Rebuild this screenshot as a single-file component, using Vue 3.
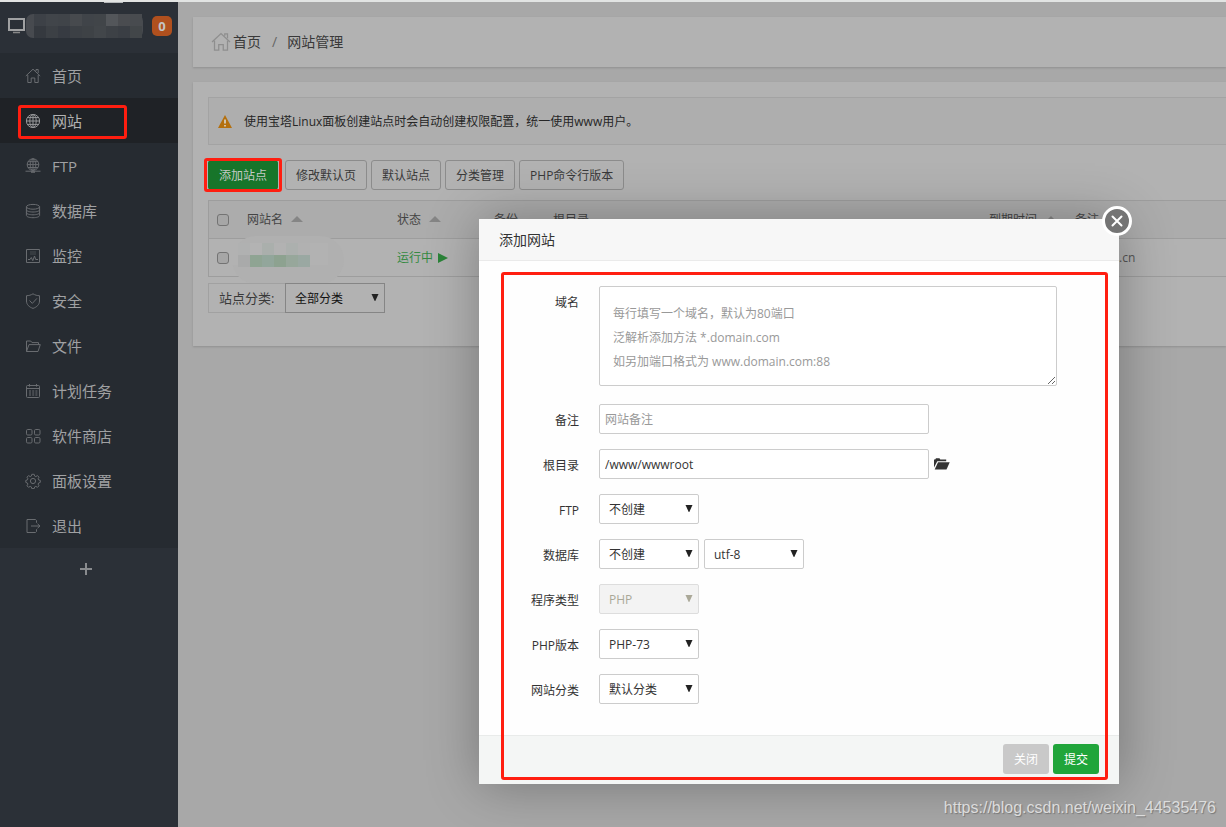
<script setup>
import { ref } from 'vue'

const menu = [
  { label: '首页', icon: 'home' },
  { label: '网站', icon: 'globe', active: true },
  { label: 'FTP', icon: 'ftp' },
  { label: '数据库', icon: 'database' },
  { label: '监控', icon: 'monitor' },
  { label: '安全', icon: 'shield' },
  { label: '文件', icon: 'folder' },
  { label: '计划任务', icon: 'calendar' },
  { label: '软件商店', icon: 'grid' },
  { label: '面板设置', icon: 'gear' },
  { label: '退出', icon: 'exit' },
]

const icons = {
  home: '<path d="M.8 8 8 1.2 15.2 8M2.8 7v7.5h3.4V10h3.6v4.5h3.4V7M11 3V1.5h2.2V5"/>',
  globe: '<circle cx="8" cy="8" r="6.6"/><ellipse cx="8" cy="8" rx="3.2" ry="6.6"/><path d="M8 1.4v13.2M1.4 8h13.2M2.5 4.6h11M2.5 11.4h11"/>',
  ftp: '<circle cx="8" cy="6.6" r="5.8"/><ellipse cx="8" cy="6.6" rx="2.8" ry="5.8"/><path d="M8 .8v11.6M2.2 6.6h11.6M3 3.7h10M3 9.5h10M.5 13.2h15"/><path d="M6 14h4" stroke-width="1.6"/>',
  database: '<ellipse cx="8" cy="3.8" rx="6.6" ry="2.4"/><path d="M1.4 3.8v8.6c0 1.4 3 2.3 6.6 2.3s6.6-.9 6.6-2.3V3.8M1.4 6.8c0 1.3 3 2.2 6.6 2.2s6.6-.9 6.6-2.2M1.4 9.6c0 1.3 3 2.2 6.6 2.2s6.6-.9 6.6-2.2"/>',
  monitor: '<path d="M1.5 1.5h13v13h-13z"/><path d="M5 4h6M5 6h6" opacity=".5"/><path d="M3 11.5h2l1.3-2 1.5 3.2L9.5 8l1.2 3.5H13"/>',
  shield: '<path d="M8 .8c2 1.3 4.2 1.9 6.5 1.9V8c0 3.6-2.6 6-6.5 7.4C4.1 14 1.5 11.6 1.5 8V2.7C3.8 2.7 6 2.1 8 .8z"/><path d="m4.6 7.500 2.700 2.900 4.600-5"/>',
  folder: '<path d="M1.5 13.5V3h4.200l1.300 1.600h6.500v2M1.500 13.500 4 6.600h11.300l-2.300 6.900z"/>',
  calendar: '<rect x="1.500" y="2.500" width="13" height="12" rx="1"/><path d="M1.500 5.500h13M4.500 1v2.600M11.500 1v2.600"/><path d="M4 8h9M4 10h9M4 12h9" stroke-dasharray="2 1.200"/>',
  grid: '<rect x="1.500" y="1.500" width="5.500" height="5.500" rx="1.200"/><rect x="9.500" y="1.500" width="5.500" height="5.500" rx="1.200"/><rect x="1.500" y="9.500" width="5.500" height="5.500" rx="1.200"/><rect x="9.500" y="9.500" width="5.500" height="5.500" rx="1.200"/>',
  gear: '<circle cx="8" cy="8" r="2.600"/><path d="M6.800 1.300h2.400l.5 1.800 1.100.5 1.700-1 1.500 1.600-.9 1.600.5 1.100 1.700.5v2l-1.700.6-.5 1.100.9 1.700-1.500 1.500-1.700-.9-1.100.5-.5 1.700H6.800l-.5-1.700-1.100-.5-1.700.9L2 12.800l.9-1.700-.5-1.100-1.600-.6v-2l1.600-.5.5-1.100L2 4.200l1.500-1.600 1.700 1 1.100-.5z"/>',
  exit: '<path d="M11.500 4.800V2.500l-1-1H2v13h8.500l1-1v-2.300M6 8h9M12.500 5.800 15 8l-2.500 2.200"/>',
}

const headBlocks = [
  ['#3d4147', '#41454a', '#404449', '#474a4e', '#404449', '#414549', '#53565a', '#4a4c50', '#484b4f'],
  ['#35393f', '#3c4045', '#373b42', '#3c4045', '#3e4246', '#42464a', '#3d4146', '#3a3e44', '#424649'],
]
const rowBlocks = [
  ['#b0b1b1', '#b3b3b3', '#aaafac', '#b2b2b2', '#acb0ae', '#b1b1b1'],
  ['#a9aaaa', '#8fa493', '#92a69b', '#8da290', '#97a79b', '#9aa8a2'],
]

const hint = '每行填写一个域名，默认为80端口\n泛解析添加方法 *.domain.com\n如另加端口格式为 www.domain.com:88'
const domains = ref('')
const note = ref('')
const path = ref('/www/wwwroot')

const selectRows = [
  { label: 'FTP', id: 'ftp', fields: [['不创建', '创建']] },
  { label: '数据库', id: 'db', fields: [['不创建', 'MySQL'], ['utf-8', 'gbk']] },
  { label: '程序类型', id: 'type', disabled: true, fields: [['PHP']] },
  { label: 'PHP版本', id: 'php', fields: [['PHP-73', '纯静态']] },
  { label: '网站分类', id: 'category', fields: [['默认分类']] },
]
</script>

<template>
  <div class="panel">
    <aside class="sidebar">
      <div class="notch"></div>
      <header class="server">
        <svg class="screen" viewBox="0 0 18 18" aria-hidden="true"><path d="M1 2h15v11H1z" fill="none" stroke="#a0a1a2" stroke-width="2" /><path d="M5 15.500h7" stroke="#888" stroke-width="1.500" /></svg>
        <svg class="mosaic" viewBox="0 0 117 24" aria-hidden="true">
          <rect width="117" height="24" rx="7" fill="#474a4f" />
          <g v-for="(line, y) in headBlocks" :key="y">
            <rect v-for="(c, x) in line" :key="x" :x="8 + x * 12" :y="y * 12" width="12" height="12" :fill="c" />
          </g>
        </svg>
        <span class="badge">0</span>
      </header>
      <nav>
        <ul class="menu">
          <li v-for="m in menu" :key="m.label">
            <a href="#" :class="{ active: m.active }">
              <svg class="menu-icon" viewBox="0 0 16 16" aria-hidden="true" v-html="icons[m.icon]"></svg>
              <span>{{ m.label }}</span>
            </a>
          </li>
        </ul>
      </nav>
      <button class="add-menu" type="button" aria-label="添加菜单">
        <svg viewBox="0 0 14 14" aria-hidden="true"><path d="M7 1v12M1 7h12" stroke="#898b8e" stroke-width="2" /></svg>
      </button>
    </aside>

    <main class="main">
      <div class="crumbs card">
        <svg class="crumb-icon" viewBox="0 0 16 16" aria-hidden="true" v-html="icons.home"></svg>
        <a href="#">首页</a><span class="slash">/</span><a href="#">网站管理</a>
      </div>

      <section class="content card">
        <p class="notice">
          <svg viewBox="0 0 14 13" aria-hidden="true"><path d="M7 0 14 13H0z" fill="#b4700f" /><path d="M7 4.500v4M7 10v1.500" stroke="#d2c4ad" stroke-width="2" /></svg>
          <span>使用宝塔Linux面板创建站点时会自动创建权限配置，统一使用www用户。</span>
        </p>
        <div class="tools">
          <button type="button" class="primary">添加站点</button>
          <button type="button">修改默认页</button>
          <button type="button">默认站点</button>
          <button type="button">分类管理</button>
          <button type="button">PHP命令行版本</button>
        </div>
        <table class="sites">
          <colgroup>
            <col class="c-check" /><col class="c-name" /><col class="c-state" /><col class="c-backup" /><col class="c-root" /><col class="c-end" /><col />
          </colgroup>
          <thead>
            <tr>
              <th><input type="checkbox" aria-label="全选" /></th>
              <th>网站名<i class="sort"></i></th>
              <th>状态<i class="sort"></i></th>
              <th>备份</th>
              <th>根目录</th>
              <th>到期时间<i class="sort"></i></th>
              <th>备注</th>
            </tr>
          </thead>
          <tbody>
            <tr>
              <td><input type="checkbox" aria-label="选择站点" /></td>
              <td class="name">
                <svg class="site-mosaic" viewBox="0 0 112 50" aria-hidden="true">
                  <rect y="1" width="112" height="48" rx="24" fill="#b0b0b0" />
                  <path d="M0 8h96v22H0z" fill="#b2b2b2" />
                  <g v-for="(line, y) in rowBlocks" :key="y">
                    <rect v-for="(c, x) in line" :key="x" :x="6 + x * 12" :y="8 + y * 12" width="12" height="12" :fill="c" />
                  </g>
                </svg>
              </td>
              <td><a class="running" href="#">运行中<i class="play"></i></a></td>
              <td></td>
              <td></td>
              <td></td>
              <td class="remark">.cn</td>
            </tr>
          </tbody>
        </table>
        <div class="filter">
          <label for="site-class">站点分类:</label>
          <span class="select">
            <select id="site-class"><option>全部分类</option></select>
            <svg viewBox="0 0 8 7" aria-hidden="true"><path d="M.5 0h7L4.300 7h-.6z" /></svg>
          </span>
        </div>
      </section>
    </main>

    <form class="dialog" role="dialog" aria-labelledby="dialog-title" @submit.prevent>
      <h2 id="dialog-title">添加网站</h2>
      <button class="close" type="button" aria-label="关闭窗口">
        <svg viewBox="0 0 12 12" aria-hidden="true"><path d="m1.500 1.500 9 9M10.500 1.500l-9 9" stroke="#fff" stroke-width="2" stroke-linecap="round" /></svg>
      </button>
      <div class="fields">
        <div class="row tall">
          <label for="domains">域名</label>
          <textarea id="domains" v-model="domains" :placeholder="hint"></textarea>
        </div>
        <div class="row">
          <label for="note">备注</label>
          <input id="note" v-model="note" type="text" placeholder="网站备注" />
        </div>
        <div class="row">
          <label for="path">根目录</label>
          <input id="path" v-model="path" type="text" />
          <button class="browse" type="button" aria-label="选择目录">
            <svg viewBox="0 0 16 12" aria-hidden="true"><path d="M0 9.500V1.500h1.200L2 .3h3.500l.8 1.200h5.900v1.700H3.300z" /><path d="M4 4.200h11.700L12.500 11.500H.7z" /></svg>
          </button>
        </div>
        <div v-for="r in selectRows" :key="r.id" class="row">
          <label :for="r.id + 0">{{ r.label }}</label>
          <span v-for="(options, i) in r.fields" :key="i" class="select">
            <select :id="r.id + i" :disabled="r.disabled" :aria-label="i ? '编码' : r.label">
              <option v-for="o in options" :key="o">{{ o }}</option>
            </select>
            <svg viewBox="0 0 8 7" aria-hidden="true"><path d="M.5 0h7L4.300 7h-.6z" /></svg>
          </span>
        </div>
      </div>
      <footer class="actions">
        <button type="button" class="cancel">关闭</button>
        <button type="submit" class="submit">提交</button>
      </footer>
    </form>

    <p class="watermark">https://blog.csdn.net/weixin_44535476</p>
  </div>
</template>

<style>
body {
  margin: 0;
  background: #a8a8a8;
}
</style>

<style scoped>
*, *::after {
  box-sizing: border-box;
}
.panel {
  position: relative;
  display: flex;
  min-height: 100vh;
  overflow: hidden;
  border-top: 2px solid #e2e4e3;
  font-family: "Open Sans", "Noto Sans CJK SC", sans-serif;
  font-size: 12px;
  line-height: 18px;
  color: #393939;
}
button, input, select, textarea {
  margin: 0;
  font: inherit;
  color: inherit;
}
a {
  color: inherit;
  text-decoration: none;
}

/* sidebar */
.sidebar {
  position: relative;
  flex: 0 0 178px;
  background: #2b3037;
}
.notch {
  position: absolute;
  top: -1px;
  left: 104px;
  width: 19px;
  height: 2px;
  background: #b5b8ba;
}
.server {
  display: flex;
  align-items: center;
  height: 51px;
  padding: 0 6px 3px 8px;
}
.screen {
  width: 18px;
  height: 18px;
}
.mosaic {
  width: 117px;
  height: 24px;
}
.badge {
  width: 20px;
  margin-left: auto;
  border-radius: 5px;
  background: #b0501e;
  color: #c4c4c4;
  font-size: 13px;
  font-weight: 700;
  line-height: 20px;
  text-align: center;
}
.menu {
  margin: 0;
  padding: 0;
  list-style: none;
}
.menu a {
  position: relative;
  display: flex;
  align-items: center;
  gap: 11px;
  height: 45px;
  padding-left: 25px;
  background: #262b31;
  color: #a0a1a3;
  font-size: 15px;
}
.menu a.active {
  background: #1f2226;
  color: #b2b2b2;
}
.menu a.active::after {
  content: "";
  position: absolute;
  top: 7px;
  left: 18px;
  width: 109px;
  height: 34px;
  border: 3px solid #ff1e10;
  border-radius: 3px;
}
.menu-icon {
  width: 16px;
  height: 16px;
  fill: none;
  stroke: #696c70;
}
.active .menu-icon {
  stroke: #97989a;
}
.add-menu {
  display: flex;
  justify-content: center;
  width: 100%;
  padding: 14px 6px 14px 0;
  border: 0;
  background: none;
}
.add-menu svg {
  width: 14px;
  height: 14px;
}

/* page */
.main {
  flex: 1;
  min-width: 0;
  padding: 15px 0 15px 15px;
}
.card {
  background: #b2b2b2;
  box-shadow: 0 1px 2px rgba(0, 0, 0, 0.15);
}
.crumbs {
  display: flex;
  align-items: center;
  height: 50px;
  padding-left: 18px;
  font-size: 14px;
}
.crumb-icon {
  width: 20px;
  height: 20px;
  margin-right: 2px;
  fill: none;
  stroke: #8e8e8e;
}
.slash {
  margin: 0 10px 0 11px;
  color: #666;
}
.content {
  margin-top: 15px;
  padding: 15px 0 33px 15px;
}
.notice {
  display: flex;
  align-items: center;
  gap: 12px;
  height: 48px;
  margin: 0 0 15px;
  padding-left: 9px;
  border: 1px solid #a3a3a3;
  border-right: 0;
  background: #aeaeae;
  color: #262626;
}
.notice svg {
  width: 14px;
  height: 13px;
}
.notice span {
  padding-top: 2px;
}
.tools {
  display: flex;
  gap: 4px;
}
.tools button {
  position: relative;
  height: 30px;
  padding: 2px 10px 0;
  border: 1px solid #8c8c8c;
  border-radius: 3px;
  background: #b2b2b2;
}
.tools .primary {
  margin-right: 3px;
  border-color: #17752a;
  background: #17752a;
  color: #c4c9c5;
}
.primary::after {
  content: "";
  position: absolute;
  inset: -3px -5px;
  border: 3px solid #ff1e10;
  border-radius: 3px;
}
.sites {
  width: 100%;
  margin-top: 10px;
  border-collapse: separate;
  border-spacing: 0;
  border-top: 1px solid #9d9d9d;
  border-left: 1px solid #9d9d9d;
  table-layout: fixed;
}
.c-check { width: 30px; }
.c-name { width: 150px; }
.c-state { width: 97px; }
.c-backup { width: 59px; }
.c-root { width: 436px; }
.c-end { width: 86px; }
.sites th, .sites td {
  height: 38px;
  padding: 0 8px;
  border-bottom: 1px solid #9d9d9d;
  font-weight: 400;
  text-align: left;
  white-space: nowrap;
}
.sites th {
  background: #acacac;
  color: #444;
}
.sites input {
  display: block;
  appearance: none;
  width: 12px;
  height: 12px;
  border: 1px solid #737373;
  border-radius: 3px;
  background: #a6a6a6;
}
.sort {
  display: inline-block;
  margin: 0 0 2px 8px;
  border: 6px solid transparent;
  border-top-width: 0;
  border-bottom: 6px solid #858585;
}
.sites .name {
  position: relative;
  padding: 0;
}
.site-mosaic {
  position: absolute;
  top: -4px;
  left: -7px;
  width: 112px;
  height: 50px;
}
.running {
  color: #358a42;
}
.play {
  display: inline-block;
  margin-left: 5px;
  border: 5px solid transparent;
  border-right-width: 0;
  border-left: 10px solid #2b8439;
  vertical-align: -1px;
}
.sites .remark {
  padding-left: 52px;
  color: #555;
}
.filter {
  display: flex;
  width: max-content;
  margin-top: 6px;
}
.filter label {
  position: relative;
  width: 77px;
  padding-left: 10px;
  border: 1px solid #a1a1a1;
  border-right: 0;
  font-size: 13px;
  line-height: 28px;
}
.select {
  position: relative;
  width: 100px;
}
.select svg {
  position: absolute;
  top: 11px;
  right: 6px;
  width: 8px;
  height: 7px;
  fill: #222;
  pointer-events: none;
}
select {
  display: block;
  appearance: none;
  width: 100%;
  height: 30px;
  padding: 2px 9px 0;
  border: 1px solid #ccc;
  border-radius: 2px;
  background: #fff;
}
.filter select {
  border-color: #858585;
  border-radius: 0;
  background: #b2b2b2;
  color: #111;
}

/* dialog */
.dialog {
  position: absolute;
  top: 217px;
  left: 479px;
  width: 640px;
  background: #fefefe;
  box-shadow: 1px 1px 50px rgba(0, 0, 0, 0.3);
  color: #333;
}
.dialog h2 {
  height: 42px;
  margin: 0;
  padding-left: 20px;
  border-bottom: 1px solid #eaeaea;
  background: #f7f7f7;
  font-size: 14px;
  font-weight: 400;
  line-height: 42px;
}
.close {
  position: absolute;
  top: -13px;
  right: -13px;
  display: flex;
  align-items: center;
  justify-content: center;
  width: 30px;
  height: 30px;
  padding: 0;
  border: 3px solid #fff;
  border-radius: 50%;
  background: #747474;
}
.close svg {
  width: 12px;
  height: 12px;
}
.fields {
  display: grid;
  gap: 15px;
  padding: 25px 20px 31px 0;
}
.row {
  display: flex;
  gap: 5px;
}
.row.tall {
  margin-bottom: 3px;
}
.row label {
  width: 100px;
  height: 30px;
  margin-right: 15px;
  padding-top: 2px;
  line-height: 30px;
  text-align: right;
}
.row input, .row textarea {
  width: 330px;
  height: 30px;
  padding: 0 5px;
  border: 1px solid #ccc;
  border-radius: 2px;
  background: #fff;
}
.row textarea {
  width: 458px;
  height: 100px;
  padding: 15px 13px 10px;
  line-height: 24px;
}
::placeholder {
  color: #999;
  opacity: 1;
}
.browse {
  padding: 0;
  border: 0;
  background: none;
}
.browse svg {
  display: block;
  width: 16px;
  height: 12px;
  fill: #333;
}
.row select:disabled {
  border-color: #ddd;
  background: #f3f3f3;
  color: #aaa898;
  opacity: 1;
}
.row select:disabled + svg {
  fill: #aaa898;
}
.actions {
  display: flex;
  justify-content: flex-end;
  gap: 4px;
  padding: 8px 20px 10px;
  border-top: 1px solid #e9ebea;
  background: #f4f6f5;
}
.actions button {
  height: 30px;
  padding: 2px 11px 0;
  border: 0;
  border-radius: 3px;
  background: #c9c9c9;
  color: #fff;
}
.actions .submit {
  background: #20a53a;
}
.dialog::after {
  content: "";
  position: absolute;
  inset: 53px 11px 4px 22px;
  border: 3px solid #ff1e10;
  border-radius: 3px;
  pointer-events: none;
}
.watermark {
  position: absolute;
  right: 10px;
  bottom: 9px;
  margin: 0;
  color: #dcdcdc;
  font-family: "Liberation Sans", Arial, sans-serif;
  font-size: 16px;
  line-height: 20px;
  text-shadow: 1px 1px 1px #777;
}
</style>
